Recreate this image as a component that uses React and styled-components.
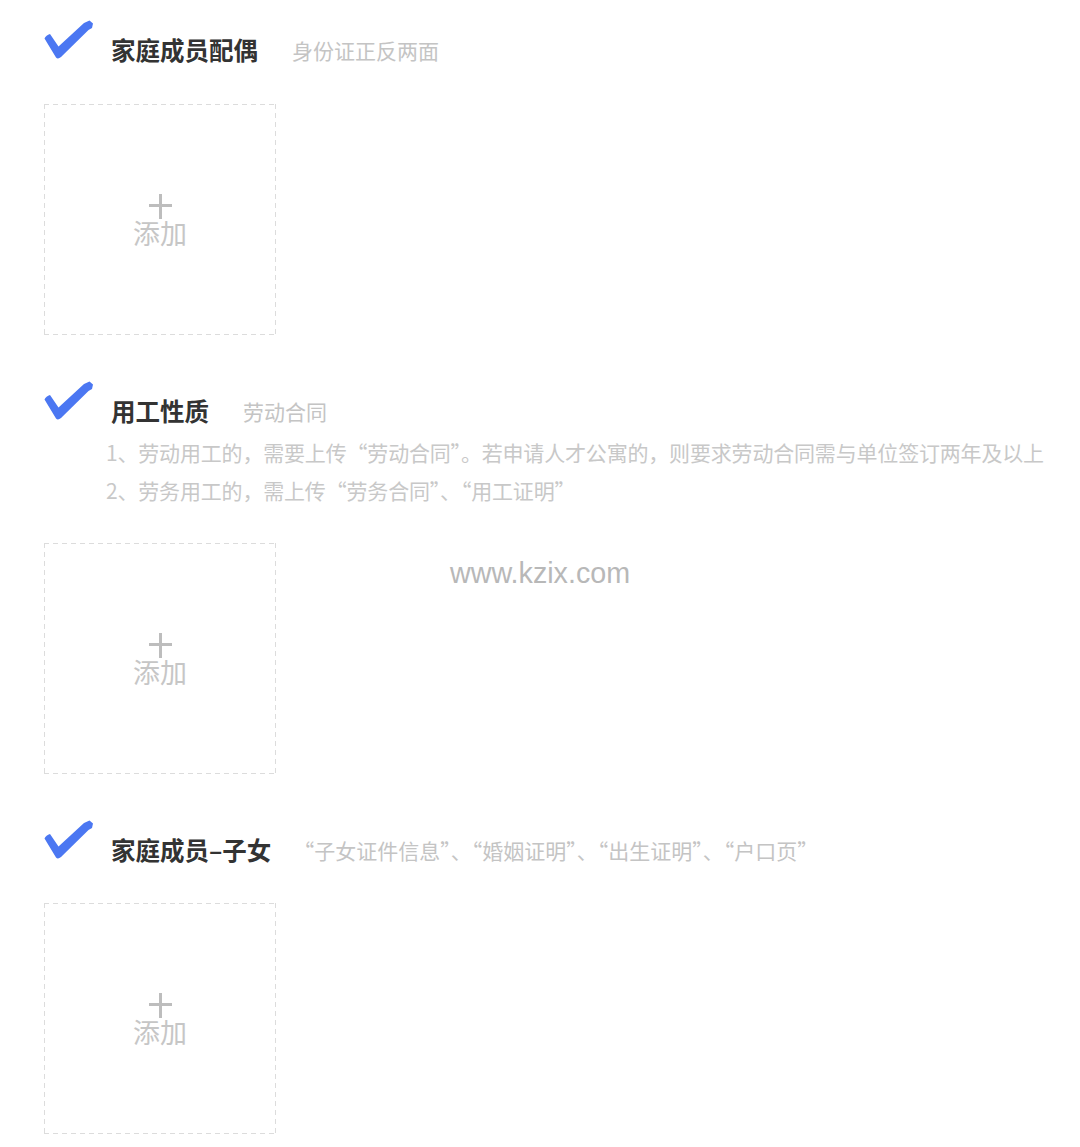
import React from "react";
import styled, { createGlobalStyle } from "styled-components";

const Global = createGlobalStyle`
  html, body { margin: 0; padding: 0; background: #ffffff; }
  body { font-family: "Noto Sans CJK SC", "Noto Sans", sans-serif; }
`;

const Page = styled.div`
  position: relative;
  width: 1080px;
  height: 1147px;
  box-sizing: border-box;
  padding: 20px 0 0 44px;
  background: #fff;
  overflow: hidden;
`;

const Section = styled.section`
  display: flex;
  flex-direction: column;
  align-items: flex-start;
  & + & { margin-top: 46px; }
`;

const Header = styled.div`
  display: flex;
  align-items: flex-start;
  gap: 17px;
`;

const CheckSvg = styled.svg`
  width: 50px;
  height: 42px;
  flex: none;
`;

const TitleRow = styled.div`
  display: flex;
  align-items: center;
  height: 34px;
  margin-top: 13px;
`;

const Title = styled.h2`
  margin: 0;
  font-size: 24.5px;
  line-height: 34px;
  font-weight: 700;
  color: #333333;
  white-space: nowrap;
`;

const Sub = styled.span`
  margin-left: ${(p) => p.$gap}px;
  font-size: 21px;
  line-height: 34px;
  color: #c4c4c4;
  white-space: nowrap;
`;

const Desc = styled.div`
  margin: 5px 0 0 62px;
  font-size: 21px;
  line-height: 38px;
  letter-spacing: -0.18px;
  color: #c8c8c8;
  white-space: nowrap;
`;

const UploadBox = styled.div`
  margin-top: ${(p) => p.$top}px;
  width: 232px;
  height: 231px;
  box-sizing: border-box;
  display: flex;
  flex-direction: column;
  align-items: center;
  justify-content: center;
  background:
    repeating-linear-gradient(90deg, #dcdcdc 0 5px, transparent 5px 9px) top left / 100% 1px no-repeat,
    repeating-linear-gradient(90deg, #dcdcdc 0 5px, transparent 5px 9px) bottom left / 100% 1px no-repeat,
    repeating-linear-gradient(180deg, #dcdcdc 0 5px, transparent 5px 9px) top left / 1px 100% no-repeat,
    repeating-linear-gradient(180deg, #dcdcdc 0 5px, transparent 5px 9px) top right / 1px 100% no-repeat;
  cursor: pointer;
`;

const Plus = styled.span`
  position: relative;
  display: block;
  width: 23px;
  height: 24px;
  &::before, &::after {
    content: "";
    position: absolute;
    background: #bdbdbd;
  }
  &::before { left: 0; right: 0; top: 10px; height: 3px; }
  &::after { top: 0; bottom: -1px; left: 10px; width: 3px; }
`;

const AddText = styled.span`
  margin-top: 1px;
  font-size: 27px;
  line-height: 27px;
  color: #c6c6c6;
`;

const Watermark = styled.div`
  position: absolute;
  left: 450px;
  top: 556px;
  font-family: "Liberation Sans", Arial, sans-serif;
  font-size: 28.7px;
  line-height: 34px;
  color: #b8b8b8;
  pointer-events: none;
`;

function Check() {
  return (
    <CheckSvg viewBox="0 0 50 42">
      <path
        d="M0.5 18.5 Q2 15 6 14 L14.5 26.5 L40 3 L45.5 0.5 L49 3.5 L48 8 L44.5 10 L17 37 Q14 39.5 12 37.5 Z"
        fill="#4b77f2"
      />
    </CheckSvg>
  );
}

function Upload({ top }) {
  return (
    <UploadBox $top={top}>
      <Plus />
      <AddText>添加</AddText>
    </UploadBox>
  );
}

const sections = [
  { title: "家庭成员配偶", sub: "身份证正反两面", desc: null, top: 37, gap: 34 },
  {
    title: "用工性质",
    sub: "劳动合同",
    desc: [
      "1、劳动用工的，需要上传“劳动合同”。若申请人才公寓的，则要求劳动合同需与单位签订两年及以上",
      "2、劳务用工的，需上传“劳务合同”、“用工证明”",
    ],
    top: 34,
    gap: 34,
  },
  {
    title: "家庭成员–子女",
    sub: "“子女证件信息”、“婚姻证明”、“出生证明”、“户口页”",
    desc: null,
    top: 36,
    gap: 22,
  },
];

export default function App() {
  return (
    <>
      <Global />
      <Page>
        {sections.map((s) => (
          <Section key={s.title}>
            <Header>
              <Check />
              <TitleRow>
                <Title>{s.title}</Title>
                <Sub $gap={s.gap}>{s.sub}</Sub>
              </TitleRow>
            </Header>
            {s.desc && (
              <Desc>
                {s.desc.map((line) => (
                  <div key={line}>{line}</div>
                ))}
              </Desc>
            )}
            <Upload top={s.top} />
          </Section>
        ))}
        <Watermark>www.kzix.com</Watermark>
      </Page>
    </>
  );
}
